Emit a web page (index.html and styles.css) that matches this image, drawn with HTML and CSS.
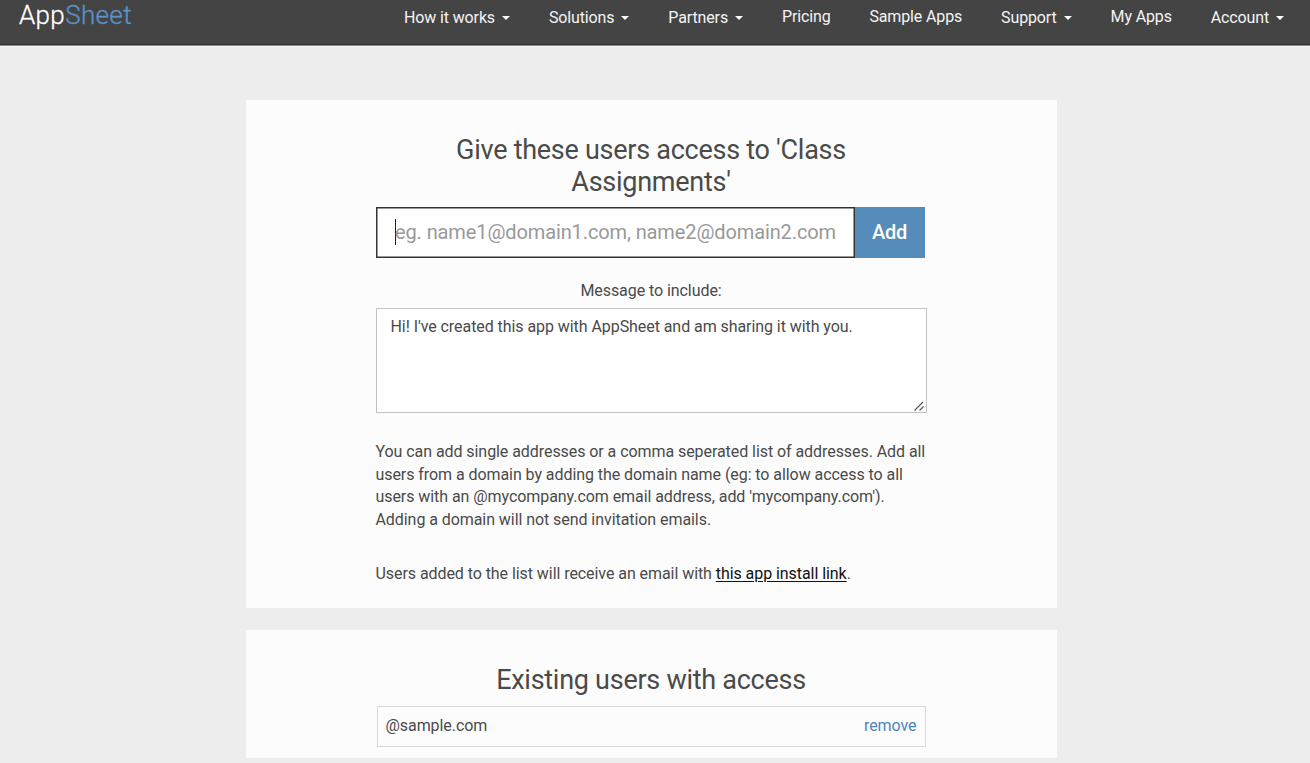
FILE: index.html
```html
<!DOCTYPE html>
<html lang="en">
<head>
<meta charset="utf-8">
<title>AppSheet</title>
<link rel="stylesheet" href="styles.css">
</head>
<body>
<header class="navbar">
  <a class="logo">App<span class="logo-accent">Sheet</span></a>
  <nav class="menu">
    <a class="menu-item has-caret">How it works<i class="caret"></i></a>
    <a class="menu-item has-caret">Solutions<i class="caret"></i></a>
    <a class="menu-item has-caret">Partners<i class="caret"></i></a>
    <a class="menu-item">Pricing</a>
    <a class="menu-item">Sample Apps</a>
    <a class="menu-item has-caret">Support<i class="caret"></i></a>
    <a class="menu-item">My Apps</a>
    <a class="menu-item has-caret">Account<i class="caret"></i></a>
  </nav>
</header>
<main class="page">
  <section class="card card-share">
    <h2 class="title">Give these users access to 'Class Assignments'</h2>
    <div class="add-row">
      <div class="email-input"><span class="cursor"></span><span class="placeholder">eg. name1@domain1.com, name2@domain2.com</span></div>
      <button class="add-btn">Add</button>
    </div>
    <div class="label">Message to include:</div>
    <div class="message"><span class="message-text">Hi! I've created this app with AppSheet and am sharing it with you.</span>
      <svg class="grip" width="10" height="10" viewBox="0 0 10 10"><path d="M0.5 9.5L9 1M5.5 9.5L9.5 5.5" stroke="#555" stroke-width="1.1" fill="none"/></svg>
    </div>
    <p class="help">You can add single addresses or a comma seperated list of addresses. Add all<br>users from a domain by adding the domain name (eg: to allow access to all<br>users with an @mycompany.com email address, add 'mycompany.com').<br>Adding a domain will not send invitation emails.</p>
    <p class="help install">Users added to the list will receive an email with <a class="link">this app install link</a>.</p>
  </section>
  <section class="card card-users">
    <h2 class="title">Existing users with access</h2>
    <div class="user-row"><span>@sample.com</span><a class="remove">remove</a></div>
  </section>
</main>
</body>
</html>
```
FILE: styles.css
```css
* { box-sizing: border-box; }
body {
  margin: 0;
  height: 763px;
  overflow: hidden;
  background: #ededed;
  color: #4a4a4a;
  font: 16px/22.4px Roboto, sans-serif;
  letter-spacing: -0.065px;
}
.navbar {
  display: flex;
  justify-content: space-between;
  height: 46px;
  padding: 0 26px 0 19px;
  background: #444;
  border-bottom: 1px solid #888;
  box-shadow: inset 0 -1px #383838, 0 1px #fafafa;
  color: #fff;
}
.logo { font: 300 26px/31px Roboto, sans-serif; letter-spacing: 0.35px; -webkit-text-stroke: 0.3px; }
.logo-accent { color: #5a92c8; }
.menu { display: flex; gap: 38.9px; letter-spacing: -0.13px; }
.menu-item { display: flex; align-items: center; height: 35px; color: #f4f4f4; white-space: nowrap; }
.has-caret { height: 35.5px; }
.caret {
  margin: 0 0 0 7px;
  border: 4.5px solid transparent;
  border-top-color: #fff;
  border-bottom: 0;
}
.page { display: flex; flex-direction: column; align-items: center; gap: 22px; padding: 54px 8px 0 0; }
.card { width: 811px; padding: 34px 130px 0; background: #fcfcfc; }
.card-share { height: 508px; }
.card-users { height: 128px; }
.title { margin: 0; font-size: 27px; line-height: 32px; font-weight: 400; text-align: center; letter-spacing: -0.27px; }
.add-row { display: flex; height: 51px; width: 549px; margin-top: 9px; }
.email-input {
  display: flex;
  align-items: center;
  width: 479px;
  padding: 0 0 1px 18px;
  border: 1px solid #333;
  box-shadow: inset 0 0 0 0.5px #333;
  background: #fff;
  color: #999;
  font-size: 20px;
  letter-spacing: -0.11px;
  white-space: nowrap;
}
.cursor { width: 1px; height: 26px; background: #222; }
.placeholder { margin-left: -0.5px; }
.add-btn { width: 70px; padding: 0 0 2px; border: 0; background: #568cba; color: #fff; font: 500 20px Roboto, sans-serif; letter-spacing: -0.2px; }
.label { margin-top: 22px; text-align: center; }
.message {
  display: flex;
  justify-content: space-between;
  width: 551px;
  height: 105px;
  margin-top: 6px;
  padding: 7px 2px 1px 14px;
  border: 1px solid #c2c2c2;
  background: #fff;
}
.grip { align-self: flex-end; }
.help { margin: 28px 0 0; white-space: nowrap; }
.install { margin-top: 32.4px; }
.link { color: #111; text-decoration: underline; text-underline-offset: 2px; }
.user-row {
  display: flex;
  align-items: center;
  justify-content: space-between;
  width: 549px;
  height: 41px;
  margin: 10px 0 0 1px;
  padding: 0 8px 1px 8px;
  border: 1px solid #d8d8d8;
}
.remove { color: #4a86bb; }
```
